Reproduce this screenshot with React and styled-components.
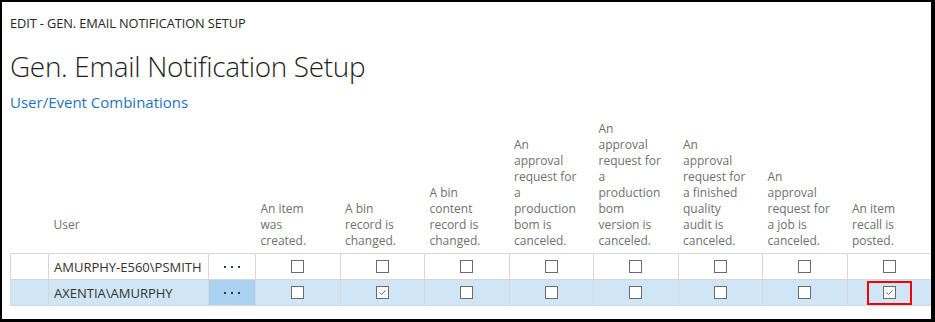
import React from 'react'
import styled, {createGlobalStyle} from 'styled-components'

const GlobalStyle = createGlobalStyle`
  html, body {
    margin: 0;
    padding: 0;
    background: #fff;
  }
  body {
    font-family: "Open Sans", "Noto Sans", sans-serif;
  }
`

const events = [
  {label: 'An item was created.', width: 50},
  {label: 'A bin record is changed.', width: 60},
  {label: 'A bin content record is changed.', width: 60},
  {label: 'An approval request for a production bom is canceled.', width: 66},
  {label: 'An approval request for a production bom version is canceled.', width: 66},
  {label: 'An approval request for a finished quality audit is canceled.', width: 66},
  {label: 'An approval request for a job is canceled.', width: 66},
  {label: 'An item recall is posted.', width: 60},
]

const rows = [
  {user: 'AMURPHY-E560\\PSMITH', selected: false, checks: [false, false, false, false, false, false, false, false]},
  {user: 'AXENTIA\\AMURPHY', selected: true, checks: [false, true, false, false, false, false, false, true]},
]

const CheckBox = ({checked, highlight}) => (
  <BoxWrap $highlight={highlight}>
    <Box>
      {checked && (
        <svg width="11" height="11" viewBox="0 0 11 11">
          <path d="M2.5 5.5 L4.5 7.5 L8.5 3.5" fill="none" stroke="#6a5f86" strokeWidth="1" />
        </svg>
      )}
    </Box>
  </BoxWrap>
)

const Dots = () => (
  <DotsWrap>
    <span /><span /><span />
  </DotsWrap>
)

export default function App() {
  return (
    <Frame>
      <GlobalStyle />
      <Breadcrumb>EDIT - GEN. EMAIL NOTIFICATION SETUP</Breadcrumb>
      <Title>Gen. Email Notification Setup</Title>
      <SubLink>User/Event Combinations</SubLink>
      <Grid>
        <colgroup>
          <col style={{width: 38}} />
          <col style={{width: 160}} />
          <col style={{width: 47}} />
          {events.map((e, i) => <col key={i} style={{width: 84.5}} />)}
        </colgroup>
        <thead>
          <tr>
            <HeadCell />
            <HeadCell $raised>User</HeadCell>
            <HeadCell />
            {events.map((e, i) => (
              <HeadCell key={i}>
                <HeadText $w={e.width}>{e.label}</HeadText>
              </HeadCell>
            ))}
          </tr>
        </thead>
        <tbody>
          {rows.map((r, ri) => (
            <Row key={ri} $selected={r.selected}>
              <Cell />
              <Cell>{r.user}</Cell>
              <DotsCell $selected={r.selected}><Dots /></DotsCell>
              {r.checks.map((c, ci) => (
                <CheckCell key={ci}>
                  <CheckBox checked={c} highlight={r.selected && ci === 7} />
                </CheckCell>
              ))}
            </Row>
          ))}
        </tbody>
      </Grid>
    </Frame>
  )
}

const Frame = styled.div`
  width: 935px;
  height: 322px;
  box-sizing: border-box;
  border-style: solid;
  border-color: #000;
  border-width: 2px 4px 3px 2px;
  overflow: hidden;
  padding: 14px 0 0 8px;
  color: #333;
`

const Breadcrumb = styled.div`
  font-size: 12.8px;
  line-height: 14px;
  color: #262626;
  letter-spacing: -0.1px;
`

const Title = styled.h1`
  margin: 20px 0 0 0;
  font-size: 27.9px;
  line-height: 32px;
  font-weight: 300;
  color: #1e1e1e;
  letter-spacing: -0.3px;
`

const SubLink = styled.div`
  margin-top: 11px;
  font-size: 15px;
  line-height: 18px;
  color: #1e73be;
`

const Grid = styled.table`
  margin-top: 10px;
  border-collapse: collapse;
  table-layout: fixed;
  width: 921px;
  font-size: 12.5px;
`

const HeadCell = styled.th`
  vertical-align: bottom;
  text-align: left;
  font-weight: 400;
  color: #707070;
  padding: 0 0 ${p => (p.$raised ? 20 : 4)}px 5px;
  line-height: 16px;
  font-size: 12px;
`

const HeadText = styled.div`
  width: ${p => p.$w}px;
`

const Row = styled.tr`
  height: 26px;
  background: ${p => (p.$selected ? '#d0e6f6' : '#fff')};
`

const Cell = styled.td`
  border: 1px solid #d6d6d6;
  padding: 0 0 0 5px;
  font-size: 13px;
  color: #333;
  white-space: nowrap;
  overflow: hidden;
`

const DotsCell = styled(Cell)`
  padding: 0;
  background: ${p => (p.$selected ? '#a9d2f0' : 'transparent')};
`

const DotsWrap = styled.div`
  display: flex;
  justify-content: center;
  gap: 5px;
  span {
    width: 2px;
    height: 2px;
    background: #2d3b55;
  }
`

const CheckCell = styled(Cell)`
  padding: 0;
`

const BoxWrap = styled.div`
  width: 45px;
  height: 24px;
  margin: 0 auto;
  box-sizing: border-box;
  display: flex;
  align-items: center;
  justify-content: center;
  border: 2px solid ${p => (p.$highlight ? '#f00000' : 'transparent')};
`

const Box = styled.div`
  width: 13px;
  height: 13px;
  box-sizing: border-box;
  border: 1px solid #6b6b6b;
  background: #fff;
  display: flex;
  align-items: center;
  justify-content: center;
`
